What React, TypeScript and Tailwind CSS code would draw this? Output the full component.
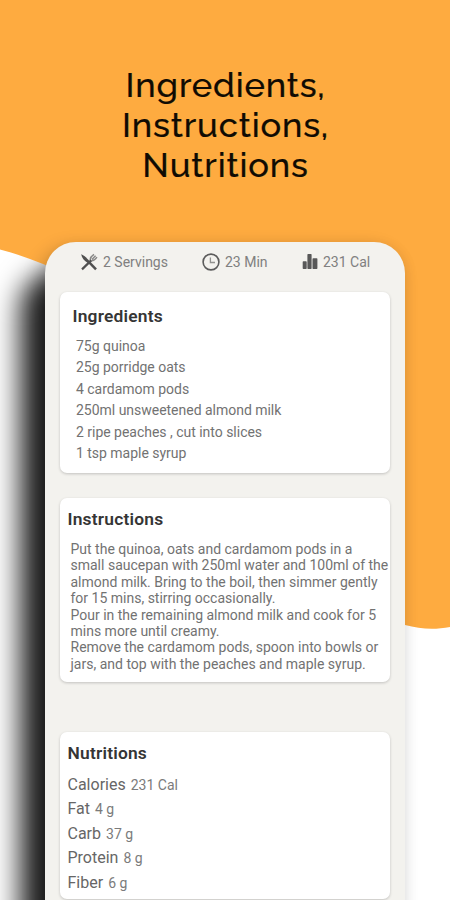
import React from "react";

const ingredients = [
  "75g quinoa",
  "25g porridge oats",
  "4 cardamom pods",
  "250ml unsweetened almond milk",
  "2 ripe peaches , cut into slices",
  "1 tsp maple syrup",
];

const instructions = [
  "Put the quinoa, oats and cardamom pods in a",
  "small saucepan with 250ml water and 100ml of the",
  "almond milk. Bring to the boil, then simmer gently",
  "for 15 mins, stirring occasionally.",
  "Pour in the remaining almond milk and cook for 5",
  "mins more until creamy.",
  "Remove the cardamom pods, spoon into bowls or",
  "jars, and top with the peaches and maple syrup.",
];

const nutritions = [
  ["Calories", "231 Cal"],
  ["Fat", "4 g"],
  ["Carb", "37 g"],
  ["Protein", "8 g"],
  ["Fiber", "6 g"],
];

const card = "rounded-[7px] bg-white shadow-[0_1px_3px_rgba(0,0,0,0.2)]";
const heading = "text-[17.4px] font-semibold leading-[22px] tracking-[0.2px] text-[#353535]";

function Backdrop() {
  return (
    <>
      <div className="absolute top-[272px] left-[20px] h-[720px] w-[200px] rounded-[36px] bg-black/87 blur-[14px]" />
      <svg className="absolute inset-0" width="450" height="900" viewBox="0 0 450 900">
        <path
          d="M0 0H450V627C434 630 420 629 405 625C340 600 280 520 225 420C170 330 80 270 0 249.5Z"
          fill="#feab40"
        />
      </svg>
    </>
  );
}

function UtensilsIcon() {
  return (
    <svg width="18" height="18" viewBox="0 0 18 18" fill="none" stroke="#505050">
      <path d="M1.2 1.2C4 2.2 8 6 9.7 8.4L7.8 10.1C4.4 8 1.6 4.6 1.2 1.2Z" fill="#505050" stroke="none" />
      <path d="M9 9.2L16 16.4" strokeWidth="2.5" />
      <path d="M2 16.4L11.2 7.4" strokeWidth="2.2" />
      <path d="M10.6 7.7C9.6 5.8 11.5 3 14 1.3M10.6 7.7C12.8 8.4 15.4 6.4 17 4.2M11.9 6.5L15.6 2.7" strokeWidth="1.4" strokeOpacity="0.65" />
    </svg>
  );
}

function ClockIcon() {
  return (
    <svg width="18" height="18" viewBox="0 0 18 18" fill="none" stroke="#5c5c5c">
      <circle cx="9" cy="9" r="7.9" strokeWidth="1.6" />
      <path d="M8.4 4.5V9.5H13" strokeWidth="1.3" strokeOpacity="0.65" />
    </svg>
  );
}

function BarsIcon() {
  return (
    <svg width="17" height="17" viewBox="0 0 17 17" fill="#585858">
      <rect x="0.7" y="8.2" width="4" height="7.8" rx="0.7" />
      <rect x="5.4" y="1" width="4.2" height="15" rx="0.7" />
      <rect x="10.5" y="5.2" width="4.9" height="10.8" rx="0.7" />
    </svg>
  );
}

export default function App() {
  return (
    <div className="relative h-[900px] w-[450px] overflow-hidden bg-white font-[Roboto,sans-serif]">
      <Backdrop />
      <div className="relative flex h-full flex-col">
        <h1 className="flex h-[242px] shrink-0 flex-col items-center pt-[65px] pl-[1px] font-[Raleway,Lato,sans-serif] text-[34.5px] font-medium leading-[40px] tracking-[0.85px] text-[#100b03] [-webkit-text-stroke:0.2px_#100b03]">
          <span>Ingredients,</span>
          <span>Instructions,</span>
          <span>Nutritions</span>
        </h1>

        <main className="ml-[45px] h-[720px] w-[360px] shrink-0 rounded-t-[31px] bg-[#f3f2ee] px-[15px] shadow-[-5px_6px_18px_rgba(0,0,0,0.22),4px_0_12px_rgba(0,0,0,0.03)]">
          <div className="flex h-[50px] pt-[11px] text-[14px] leading-[18px] text-[#808080]">
            <div className="flex w-[122px] gap-[5px] pl-[20px]">
              <UtensilsIcon />
              <span className="whitespace-nowrap">2 Servings</span>
            </div>
            <div className="flex w-[100px] gap-[5px] pl-[20px]">
              <ClockIcon />
              <span className="whitespace-nowrap">23 Min</span>
            </div>
            <div className="flex gap-[4px] pl-[20px]">
              <BarsIcon />
              <span className="whitespace-nowrap">231 Cal</span>
            </div>
          </div>

          <section className={`h-[181px] pt-[13px] ${card}`}>
            <h2 className={`pl-[12.5px] ${heading}`}>Ingredients</h2>
            <ul className="pl-[16px] pt-[9px] text-[14px] leading-[21.4px] tracking-[-0.02px] text-[#727272]">
              {ingredients.map((text) => (
                <li key={text} className="whitespace-nowrap">{text}</li>
              ))}
            </ul>
          </section>

          <section className={`mt-[25px] h-[184px] pt-[10px] ${card}`}>
            <h2 className={`pl-[7.5px] ${heading}`}>Instructions</h2>
            <div className="pl-[10.5px] pt-[11px] text-[14px] leading-[16.4px] text-[#727272]">
              {instructions.map((line) => (
                <p key={line} className="whitespace-nowrap">{line}</p>
              ))}
            </div>
          </section>

          <section className={`mt-[50px] h-[167px] pt-[10px] ${card}`}>
            <h2 className={`pl-[7.5px] ${heading}`}>Nutritions</h2>
            <dl className="pl-[7.5px] pt-[8.5px]">
              {nutritions.map(([name, amount]) => (
                <div key={name} className="flex h-[24.6px] items-baseline gap-[5px] leading-[24.6px]">
                  <dt className="text-[16px] text-[#666]">{name}</dt>
                  <dd className="text-[14px] text-[#7b7b7b]">{amount}</dd>
                </div>
              ))}
            </dl>
          </section>
        </main>
      </div>
    </div>
  );
}
